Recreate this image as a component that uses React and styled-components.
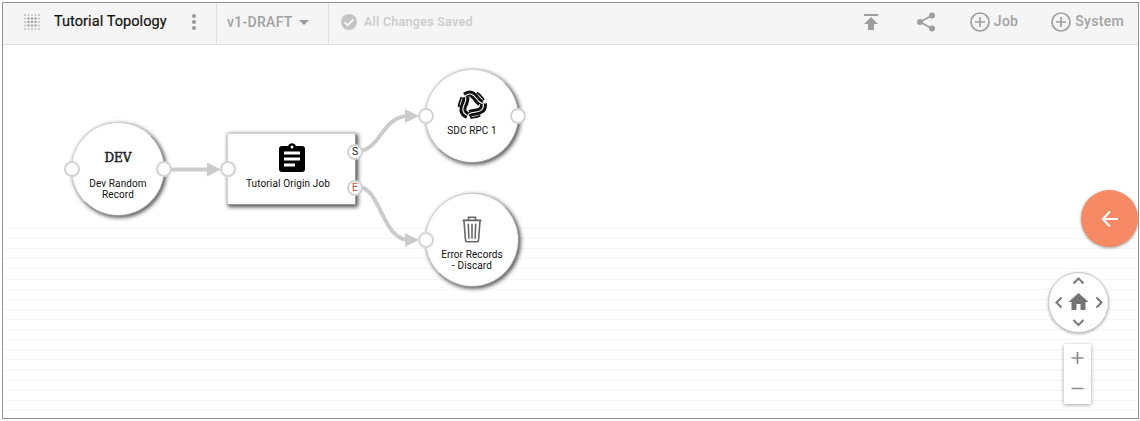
import React from "react";
import styled, { createGlobalStyle } from "styled-components";

const Global = createGlobalStyle`
  *{box-sizing:border-box}
  body{margin:0;background:#fff;font-family:Roboto,"Liberation Sans",sans-serif;color:#111}
  svg{display:block}
`;
const Frame = styled.div`
  width:1137px;height:417px;margin:2px;border:1px solid #929292;
  display:flex;flex-direction:column;overflow:hidden;
`;
const Toolbar = styled.header`
  height:42px;flex:none;display:flex;background:#f5f5f5;border-bottom:1px solid #dfdfdf;
`;
const Section = styled.div`
  width:${p => p.$w}px;display:flex;align-items:center;
  padding:0 0 4px ${p => p.$pad}px;
  border-right:${p => (p.$divided ? "1px solid #e0e0e0" : "0")};
`;
const Label = styled.span`
  font-size:${p => p.$size || 14}px;font-weight:${p => p.$weight || 500};line-height:20px;white-space:nowrap;
  color:${p => p.$color || "#a2a2a2"};letter-spacing:${p => p.$track || 0}px;
  margin-left:${p => p.$gap || 0}px;
`;
const Title = styled(Label)`-webkit-text-stroke:.2px #111;`;
const Caret = styled.svg`margin:2px 0 0 6px;`;
const Actions = styled.nav`
  margin-left:auto;display:flex;align-items:center;padding:0 14px 5px 0;color:#9e9e9e;
`;
const Action = styled.div`
  display:flex;align-items:center;margin-left:${p => p.$gap}px;
  svg{position:relative;top:1px}
`;
const Canvas = styled.main`
  flex:1;position:relative;
  &::before{content:"";position:absolute;left:1px;right:1px;top:183px;bottom:0;
    background:repeating-linear-gradient(to bottom,#f6f6f6 0,#f6f6f6 1px,transparent 1px,transparent 10.11px);}
`;
const Wires = styled.svg`position:absolute;left:0;top:0;`;
const Node = styled.div`
  position:absolute;left:${p => p.$x}px;top:${p => p.$y}px;
  width:${p => p.$w}px;height:${p => p.$h}px;
  border-radius:${p => (p.$round ? "50%" : "1px")};background:#fff;
  border:1px solid #d2d2d2;border-right-color:#999;border-bottom-color:#999;
  box-shadow:1.5px 1.5px 4px rgba(0,0,0,.72);
  display:flex;flex-direction:column;align-items:center;padding-top:${p => p.$pt}px;
`;
const Caption = styled.div`
  font-size:10px;line-height:11px;text-align:center;white-space:nowrap;
  margin-top:${p => p.$gap}px;margin-right:${p => p.$shift || 0}px;letter-spacing:${p => p.$track || 0}px;
`;
const DevMark = styled.div`
  font:400 12px/16px "DejaVu Serif",serif;color:#222;
  -webkit-text-stroke:.5px #222;
`;
const Port = styled.i`
  position:absolute;left:${p => p.$x - 8}px;top:${p => p.$y - 8}px;width:16px;height:16px;
  border:2px solid #d4d4d4;border-radius:50%;background:#fff;
  display:flex;align-items:center;justify-content:center;
  font-style:normal;font-size:10.5px;line-height:10px;color:${p => p.$color || "#222"};
`;
const Fab = styled.button`
  position:absolute;left:1078px;top:145px;width:57px;height:57px;border:0;padding:0;border-radius:50%;
  background:#f68a64;box-shadow:0 1px 3px rgba(0,0,0,.4);display:grid;place-items:center;
`;
const Pan = styled.div`
  position:absolute;left:1045px;top:227px;width:61px;height:61px;border-radius:50%;
  background:#fff;border:1px solid #c8c8c8;box-shadow:0 1px 3px rgba(0,0,0,.3);
`;
const Zoom = styled.div`
  position:absolute;left:1061px;top:299px;width:27px;height:60px;background:#fff;
  box-shadow:0 1px 4px rgba(0,0,0,.36);
`;

const GrainIcon = () => (
  <svg width="18" height="18" viewBox="0 0 18 18" fill="#a6a6a6">
    {[0, 1, 2, 3, 4].map(r => [0, 1, 2, 3, 4].map(c => {
      const edge = r === 0 || r === 4 || c === 0 || c === 4;
      return <circle key={`${r}${c}`} cx={2 + c * 3.5} cy={2 + r * 3.5} r={edge ? 0.85 : 1.25} />;
    }))}
  </svg>
);
const Dots = () => (
  <svg width="6" height="18" fill="#999"><circle cx="3" cy="3" r="2" /><circle cx="3" cy="9" r="2" /><circle cx="3" cy="15" r="2" /></svg>
);
const PlusCircle = () => (
  <svg width="20" height="20" fill="none" stroke="#9e9e9e" strokeWidth="1.7">
    <circle cx="10" cy="10" r="9" /><path d="M10 5v10M5 10h10" />
  </svg>
);
const band = "M-10.500 -4.500C-8 -10.500 -3 -9.500 0 -8S5 -5.800 8 -6.200";
const Swirl = () => (
  <svg width="30" height="30" viewBox="-15 -15 30 30" fill="none">
    {[30, 150, 270].map(a => (
      <g key={a} transform={`rotate(${a})`}>
        <path d={band} stroke="#fff" strokeWidth="9" />
        <path d={band} stroke="#111" strokeWidth="7" />
        <path d={band} stroke="#fff" strokeWidth="1.100" />
        <path d="M-2 -13.300C2 -13.500 5 -11.500 8 -10.500" stroke="#111" strokeWidth="1.800" />
      </g>
    ))}
  </svg>
);
const Trash = () => (
  <svg width="20" height="27" viewBox="0 0 20 27" fill="none" stroke="#666" strokeWidth="1.6">
    <path d="M0.500 4.400h19M6.500 4V1.200h7V4M2 5l1.500 19.500q.1 1.200 1.300 1.200h10.400q1.200 0 1.300-1.200L18 5M6.300 7.800l.6 15M10 7.800v15M13.700 7.800l-.6 15" />
  </svg>
);

export default function App() {
  return (
    <>
      <Global />
      <Frame>
        <Toolbar>
          <Section $w={214} $pad={20} $divided>
            <GrainIcon />
            <Title $size={14.5} $weight={400} $track={0.07} $color="#111" $gap={13}>Tutorial Topology</Title>
            <Label as="div" $gap={24}><Dots /></Label>
          </Section>
          <Section $w={112} $pad={10} $divided>
            <Label $track={0.3}>v1-DRAFT</Label>
            <Caret width="10" height="5" fill="#999"><path d="M0 0h10L5 5z" /></Caret>
          </Section>
          <Section $w={180} $pad={12}>
            <svg width="16" height="16"><circle cx="8" cy="8" r="8" fill="#c4c4c4" /><path d="M3.5 8.3l3 3 6-6" fill="none" stroke="#f5f5f5" strokeWidth="2" /></svg>
            <Label $size={12.5} $track={0.28} $color="#cacaca" $gap={7}>All Changes Saved</Label>
          </Section>
          <Actions>
            <Action><svg width="16" height="18" fill="#9e9e9e"><path d="M1 1h14v2H1zM8 4l7 7h-4v6H5v-6H1z" /></svg></Action>
            <Action $gap={37}><svg width="20" height="20" fill="#9e9e9e"><path d="M16 3.5L4 10l12 6.5" fill="none" stroke="#9e9e9e" strokeWidth="1.7" /><circle cx="16" cy="3.5" r="3" /><circle cx="4" cy="10" r="3" /><circle cx="16" cy="16.5" r="3" /></svg></Action>
            <Action $gap={34}><PlusCircle /><Label $gap={4} $track={0.3}>Job</Label></Action>
            <Action $gap={33}><PlusCircle /><Label $gap={4} $track={0.3}>System</Label></Action>
          </Actions>
        </Toolbar>
        <Canvas>
          <Wires width="540" height="260" fill="none" stroke="#cbcbcb" strokeWidth="4">
            <path d="M167 124.500H205M358 106C378 102 380 71 406 71M358 142C378 147 380 195 406 195" />
            <path d="M204 117.500l14 7-14 7zM402 64l14 7-14 7zM402 188l14 7-14 7z" fill="#cbcbcb" stroke="none" />
          </Wires>
          <Node $round $x={68} $y={77} $w={94} $h={94} $pt={27}>
            <DevMark>DEV</DevMark>
            <Caption $gap={12} $track={0.1}>Dev Random<br />Record</Caption>
          </Node>
          <Node $x={224} $y={88} $w={129} $h={72} $pt={9}>
            <svg width="26" height="29" viewBox="0 0 26 29"><path d="M3 3h6.2a4 4 0 0 1 7.6 0H23q3 0 3 3v20q0 3-3 3H3q-3 0-3-3V6q0-3 3-3z" fill="#000" /><circle cx="13" cy="4" r="1.5" fill="#fff" /><path d="M5 10h16M5 16h16M5 22h11" stroke="#fff" strokeWidth="2.8" /></svg>
            <Caption $gap={6} $track={0.13} $shift={7}>Tutorial Origin Job</Caption>
          </Node>
          <Node $round $x={422} $y={24} $w={94} $h={94} $pt={20}>
            <Swirl />
            <Caption $gap={5} $track={0.1}>SDC RPC 1</Caption>
          </Node>
          <Node $round $x={422} $y={148} $w={94} $h={94} $pt={22}>
            <Trash />
            <Caption $gap={6} $track={0.1}>Error Records<br />- Discard</Caption>
          </Node>
          <Port $x={69} $y={124} /><Port $x={161} $y={124} /><Port $x={225} $y={124} />
          <Port $x={352} $y={107}>S</Port><Port $x={352} $y={143} $color="#c2503c">E</Port>
          <Port $x={423} $y={71} /><Port $x={515} $y={71} /><Port $x={423} $y={195} />
          <Fab><svg width="18" height="18" fill="none" stroke="#fff" strokeWidth="2"><path d="M17 9H2M9 1.5L1.8 9 9 16.5" /></svg></Fab>
          <Pan>
            <svg width="59" height="59" fill="none" stroke="#7b7b7b" strokeWidth="2.1">
              <path d="M24.5 10.5l5-5 5 5M24.5 47l5 5 5-5M12.5 24.5l-5 5 5 5M47.500 24.500l5 5-5 5" />
              <path d="M29.500 20l10 9h-3v8h-5v-6h-4v6h-5v-8h-3z" fill="#757575" stroke="none" />
            </svg>
          </Pan>
          <Zoom><svg width="27" height="60" stroke="#8a8a8a" strokeWidth="1.700"><path d="M7.500 14h12M13.500 8v12M7.500 44.500h12" /></svg></Zoom>
        </Canvas>
      </Frame>
    </>
  );
}
